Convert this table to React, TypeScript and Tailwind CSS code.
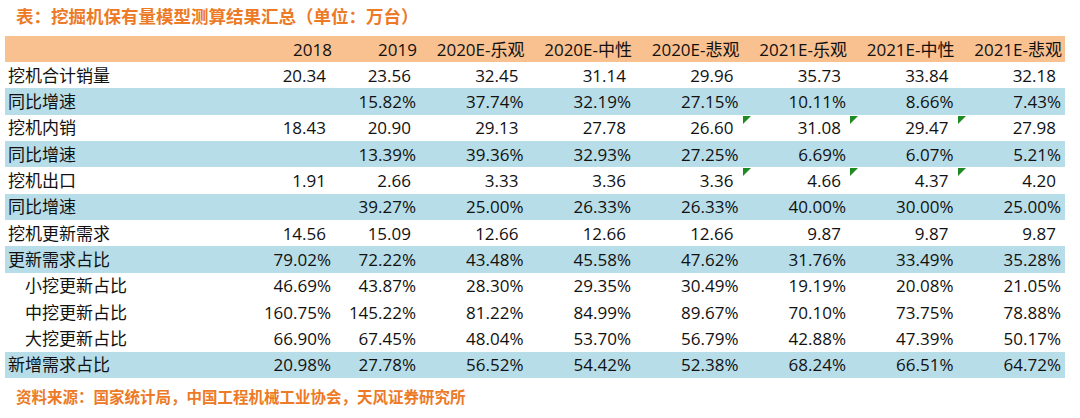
import React from "react";

type Row = { label: string; values: string[]; blue?: boolean; indent?: boolean; tri?: boolean };

const headers = ["2018", "2019", "2020E-乐观", "2020E-中性", "2020E-悲观", "2021E-乐观", "2021E-中性", "2021E-悲观"];

const rows: Row[] = [
  { label: "挖机合计销量", values: ["20.34", "23.56", "32.45", "31.14", "29.96", "35.73", "33.84", "32.18"] },
  { label: "同比增速", blue: true, values: ["", "15.82%", "37.74%", "32.19%", "27.15%", "10.11%", "8.66%", "7.43%"] },
  { label: "挖机内销", tri: true, values: ["18.43", "20.90", "29.13", "27.78", "26.60", "31.08", "29.47", "27.98"] },
  { label: "同比增速", blue: true, values: ["", "13.39%", "39.36%", "32.93%", "27.25%", "6.69%", "6.07%", "5.21%"] },
  { label: "挖机出口", tri: true, values: ["1.91", "2.66", "3.33", "3.36", "3.36", "4.66", "4.37", "4.20"] },
  { label: "同比增速", blue: true, values: ["", "39.27%", "25.00%", "26.33%", "26.33%", "40.00%", "30.00%", "25.00%"] },
  { label: "挖机更新需求", values: ["14.56", "15.09", "12.66", "12.66", "12.66", "9.87", "9.87", "9.87"] },
  { label: "更新需求占比", blue: true, values: ["79.02%", "72.22%", "43.48%", "45.58%", "47.62%", "31.76%", "33.49%", "35.28%"] },
  { label: "小挖更新占比", indent: true, values: ["46.69%", "43.87%", "28.30%", "29.35%", "30.49%", "19.19%", "20.08%", "21.05%"] },
  { label: "中挖更新占比", indent: true, values: ["160.75%", "145.22%", "81.22%", "84.99%", "89.67%", "70.10%", "73.75%", "78.88%"] },
  { label: "大挖更新占比", indent: true, values: ["66.90%", "67.45%", "48.04%", "53.70%", "56.79%", "42.88%", "47.39%", "50.17%"] },
  { label: "新增需求占比", blue: true, values: ["20.98%", "27.78%", "56.52%", "54.42%", "52.38%", "68.24%", "66.51%", "64.72%"] },
];

const grid = "grid grid-cols-[245px_85px_85px_107.5px_107.5px_107.5px_107.5px_107.5px_107.5px]";

function Tri() {
  return (
    <svg className="absolute left-0 top-[1px]" width="8" height="8" viewBox="0 0 8 8">
      <polygon points="0,0 8,0 0,8" fill="#1e8a22" />
    </svg>
  );
}

export default function App() {
  return (
    <div
      className="w-[1080px] h-[418px] bg-white text-[#111111] overflow-hidden"
      style={{ fontFamily: '"Open Sans", "Noto Sans CJK SC", sans-serif' }}
    >
      <div className="h-[36px] flex items-center pl-[16px] pb-[2px] text-[17.5px] font-bold text-[#ec7a26] leading-none">
        表：挖掘机保有量模型测算结果汇总（单位：万台）
      </div>
      <div className="ml-[5px] w-[1060px]">
        <div className={`${grid} h-[26px] bg-[#f9c090] text-[17px] leading-none`}>
          <div />
          {headers.map((h) => (
            <div key={h} className="flex items-center justify-end pr-[3px] whitespace-nowrap">
              {h}
            </div>
          ))}
        </div>
        {rows.map((r, i) => (
          <div
            key={i}
            className={`${grid} h-[26.33px] text-[17px] leading-none ${r.blue ? "bg-[#b7dde8]" : "bg-white"}`}
          >
            <div className={`flex items-center whitespace-nowrap ${r.indent ? "pl-[20px]" : "pl-[3px]"}`}>{r.label}</div>
            {r.values.map((v, j) => (
              <div
                key={j}
                className={`relative flex items-center justify-end whitespace-nowrap ${v.endsWith("%") ? "pr-[4px]" : "pr-[9px]"}`}
              >
                {r.tri && j >= 5 ? <Tri /> : null}
                {v}
              </div>
            ))}
          </div>
        ))}
      </div>
      <div className="h-[40px] flex items-center pl-[16px] text-[15.5px] font-bold text-[#ec7a26] leading-none">
        资料来源：国家统计局，中国工程机械工业协会，天风证券研究所
      </div>
    </div>
  );
}
